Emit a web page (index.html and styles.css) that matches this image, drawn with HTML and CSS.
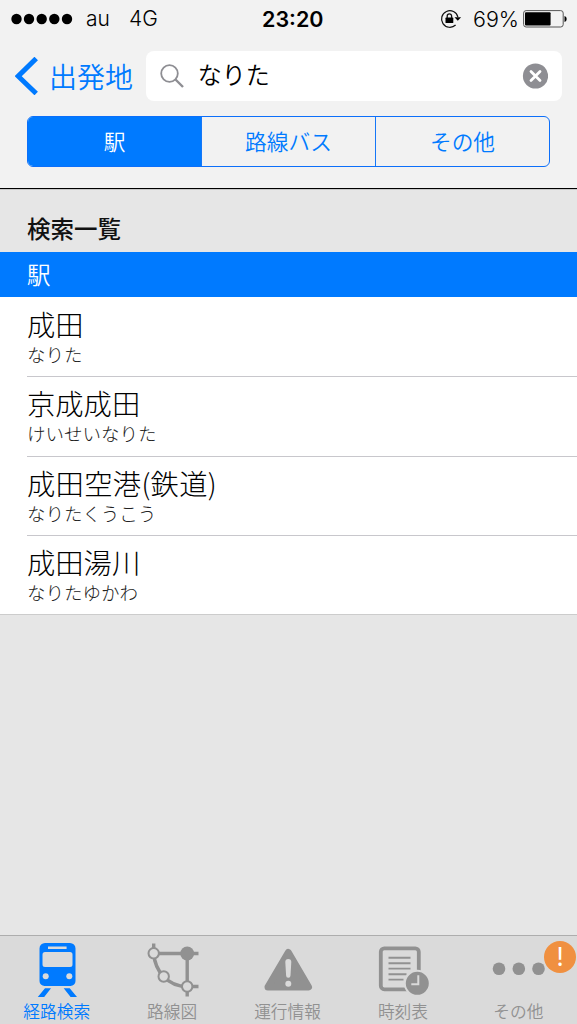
FILE: index.html
```html
<!DOCTYPE html>
<html lang="ja">
<head>
<meta charset="utf-8">
<title>出発地</title>
<link rel="stylesheet" href="styles.css">
</head>
<body>
<div class="screen">
  <header class="header">
    <div class="status">
      <svg class="signal" width="62" height="12" viewBox="0 0 62 12"><circle cx="5.5" cy="6" r="5.2"/><circle cx="18" cy="6" r="5.2"/><circle cx="30.7" cy="6" r="5.2"/><circle cx="43.3" cy="6" r="5.2"/><circle cx="56" cy="6" r="5.2"/></svg>
      <span class="carrier">au</span>
      <span class="network">4G</span>
      <span class="time">23:20</span>
      <svg class="lock" width="22" height="20" viewBox="0 0 22 20"><path d="M15.600 16A8.300 8.300 0 1 1 17.900 8" fill="none" stroke="#111" stroke-width="1.200"/><path d="M14.500 8.200h6.600l-3.300 3.600z"/><rect x="5.500" y="8.600" width="7.800" height="5.400" rx=".6"/><path d="M7.200 9V7a2.200 2.200 0 0 1 4.400 0v2" fill="none" stroke="#111" stroke-width="1.300"/></svg>
      <span class="percent">69%</span>
      <svg class="battery" width="44" height="18" viewBox="0 0 44 18"><rect x=".6" y=".6" width="39.600" height="16.400" rx="2.500" fill="none" stroke="#555" stroke-width="1"/><rect x="2" y="2.200" width="25.600" height="13.200" rx="1"/><path d="M41.500 6q2.200.4 2.200 3t-2.200 3z"/></svg>
    </div>
    <div class="nav">
      <svg class="chevron" width="24" height="38" viewBox="0 0 24 38"><path d="M21.200 1.500L3.200 19.200 21.200 36.500" fill="none" stroke="#007aff" stroke-width="5"/></svg>
      <span class="back">出発地</span>
      <div class="search">
        <svg width="24" height="24" viewBox="0 0 24 24" fill="none" stroke="#8e8e93"><circle cx="9.500" cy="9.500" r="8.300" stroke-width="1.800"/><path d="M15.500 15.500L23 23" stroke-width="2.400"/></svg>
        <span class="query">なりた</span>
        <svg class="clear" width="26" height="26" viewBox="0 0 26 26"><circle cx="13.500" cy="13" r="12.600" fill="#8e8e93"/><path d="M9 8.500l9 9M18 8.500l-9 9" stroke="#fff" stroke-width="2.800" stroke-linecap="round"/></svg>
      </div>
    </div>
    <div class="segments">
      <span class="segment active">駅</span>
      <span class="segment">路線バス</span>
      <span class="segment">その他</span>
    </div>
  </header>
  <main class="content">
    <h1 class="heading">検索一覧</h1>
    <h2 class="group">駅</h2>
    <ul class="list">
      <li class="row"><span class="name">成田</span><span class="kana">なりた</span></li>
      <li class="row"><span class="name">京成成田</span><span class="kana">けいせいなりた</span></li>
      <li class="row"><span class="name wide">成田空港(鉄道)</span><span class="kana">なりたくうこう</span></li>
      <li class="row"><span class="name">成田湯川</span><span class="kana">なりたゆかわ</span></li>
    </ul>
  </main>
  <nav class="tabs">
    <div class="tab selected">
      <svg class="icon" width="60" height="61" viewBox="0 -1 60 61"><path fill="#007aff" fill-rule="evenodd" d="M18 6h25a5.500 5.500 0 0 1 5.500 5.500v32.500a5 5 0 0 1-5 5h-26a5 5 0 0 1-5-5V11.500a5.500 5.500 0 0 1 5.500-5.500zM21 9.500v2.600h18.600V9.500zM18 15a2.500 2.500 0 0 0-2.500 2.500v10a2.500 2.500 0 0 0 2.500 2.500h25a2.500 2.500 0 0 0 2.500-2.500v-10a2.500 2.500 0 0 0-2.500-2.500z"/><circle cx="18.700" cy="39.300" r="3" fill="#dadada"/><circle cx="42.300" cy="39.300" r="3" fill="#dadada"/><path fill="#007aff" d="M18 51.200h6l-6.800 8.800h-6.400zM36.700 51.200h6l7.300 8.800h-6.400z"/></svg>
      <span class="label">経路検索</span>
    </div>
    <div class="tab">
      <svg class="icon" width="60" height="61" viewBox="0 -.5 60 61" fill="none" stroke="#919191" stroke-width="3.400"><path d="M10.700 7v10h44.800M44.200 17v43M10.700 17C12 34 24 50 44.200 50h11.300"/><circle cx="44.200" cy="17" r="6.900" fill="#919191" stroke="none"/><g fill="#dadada" stroke-width="2"><circle cx="10.700" cy="16.800" r="5.200"/><circle cx="20.700" cy="40" r="5.200"/><circle cx="44.200" cy="50" r="5.200"/></g></svg>
      <span class="label">路線図</span>
    </div>
    <div class="tab">
      <svg class="icon" width="60" height="61" viewBox="0 -.5 60 61"><path d="M30.300 16L50.500 50.500H10z" fill="#919191" stroke="#919191" stroke-width="7" stroke-linejoin="round"/><path d="M27.300 25.500a3 3 0 0 1 6 0L32.500 39a2.200 2.200 0 0 1-4.400 0z" fill="#dadada"/><circle cx="30.300" cy="47.300" r="3" fill="#dadada"/></svg>
      <span class="label">運行情報</span>
    </div>
    <div class="tab">
      <svg class="icon" width="60" height="61" viewBox="0 0 60 61" fill="none" stroke="#919191"><rect x="7.800" y="12.300" width="38" height="41" rx="3.500" stroke-width="3.800"/><path d="M15.500 21.800h22M15.500 27.300h22M15.500 32.600h22M15.500 38.200h18M15.500 43.600h15" stroke-width="1.900"/><circle cx="44.300" cy="47.300" r="12.500" fill="#919191" stroke="#dadada" stroke-width="2"/><path d="M45.300 39.300v9h-7" stroke="#dadada" stroke-width="2"/></svg>
      <span class="label">時刻表</span>
    </div>
    <div class="tab">
      <svg class="icon" width="60" height="61" viewBox="0 -.5 60 61" fill="#919191"><circle cx="10" cy="32.200" r="6.300"/><circle cx="29.800" cy="32.200" r="6.300"/><circle cx="49.500" cy="32.200" r="6.300"/></svg>
      <span class="label">その他</span>
      <span class="badge">!</span>
    </div>
  </nav>
</div>
</body>
</html>
```
FILE: styles.css
```css
* { box-sizing: border-box; margin: 0; padding: 0; }
body {
  background: #e6e6e6;
  font-family: "Noto Sans CJK JP DemiLight", "Noto Sans CJK JP", sans-serif;
  font-weight: 350;
  color: #111;
}
svg { display: block; flex: none; }
.screen { height: 1024px; display: flex; flex-direction: column; overflow: hidden; }
.header { height: 189px; flex: none; background: #f2f2f2; border-bottom: 1px solid #000; box-shadow: 0 1px 0 #c8c8c8; }
.status {
  height: 38px;
  padding: 0 9px 0 11px;
  display: grid;
  grid-template-columns: 75px 43px 133px 178px 33px 50px auto;
  align-items: center;
  font: 300 22px/38px Inter, sans-serif;
  color: #000;
  white-space: nowrap;
}
.carrier { font-size: 21px; }
.network { font-size: 21px; }
.time { font-size: 21.500px; font-weight: 600; }
.percent { font-size: 21.500px; }
.nav { height: 78px; padding: 0 15px 2px; display: flex; align-items: center; }
.back { width: 97px; padding-left: 10px; font-size: 28px; line-height: 48px; padding-bottom: 1px; color: #007aff; white-space: nowrap; }
.search {
  width: 417px;
  height: 50px;
  margin-left: 10px;
  padding: 0 14px;
  border-radius: 8px;
  background: #fff;
  display: flex;
  align-items: center;
}
.query { margin-left: 14px; padding-bottom: 4px; font-size: 24px; line-height: 46px; color: #000; }
.clear { margin-left: auto; }
.segments {
  width: 523px;
  height: 51px;
  margin-left: 27px;
  display: flex;
  border: 1px solid #0c6ffa;
  border-radius: 6px;
  overflow: hidden;
}
.segment { flex: 1; color: #007aff; font-size: 21.700px; line-height: 47px; text-align: center; }
.segment + .segment { border-left: 1px solid #1677f7; }
.segment.active { background: #007aff; color: #fff; }
.content { flex: 1; }
.heading { height: 63px; padding: 15px 27px 0; font-family: "Noto Sans CJK JP", sans-serif; font-size: 23.500px; line-height: 48px; font-weight: 500; }
.group { height: 45px; padding-left: 27px; background: #007aff; color: #fff; font-size: 23.500px; line-height: 45px; font-weight: inherit; }
.list { list-style: none; background: #fff; border-bottom: 1px solid #ccc; font-family: "Noto Sans CJK JP", sans-serif; font-weight: 300; }
.row { height: 79.300px; margin-left: 27px; padding-top: 7px; display: flex; flex-direction: column; }
.row + .row { padding-top: 6px; border-top: 1px solid #c8c7cc; }
.name { font-size: 28.300px; line-height: 39px; color: #000; }
.wide { letter-spacing: .3px; }
.kana { font-size: 18.500px; line-height: 22px; color: #222; }
.tabs { height: 89px; flex: none; display: flex; background: #dadada; border-top: 1px solid #adadad; }
.tab { flex: 1; position: relative; display: flex; flex-direction: column; align-items: center; color: #919191; }
.icon { margin-left: -1px; }
.label { font-size: 16.700px; line-height: 28px; margin-right: 2px; white-space: nowrap; }
.selected { color: #007aff; }
.badge {
  position: absolute;
  top: 5px;
  right: 1px;
  width: 32px;
  height: 32px;
  border-radius: 50%;
  background: #f09040;
  color: #fff;
  font: 400 25px/32px Inter, sans-serif;
  text-align: center;
}
```
